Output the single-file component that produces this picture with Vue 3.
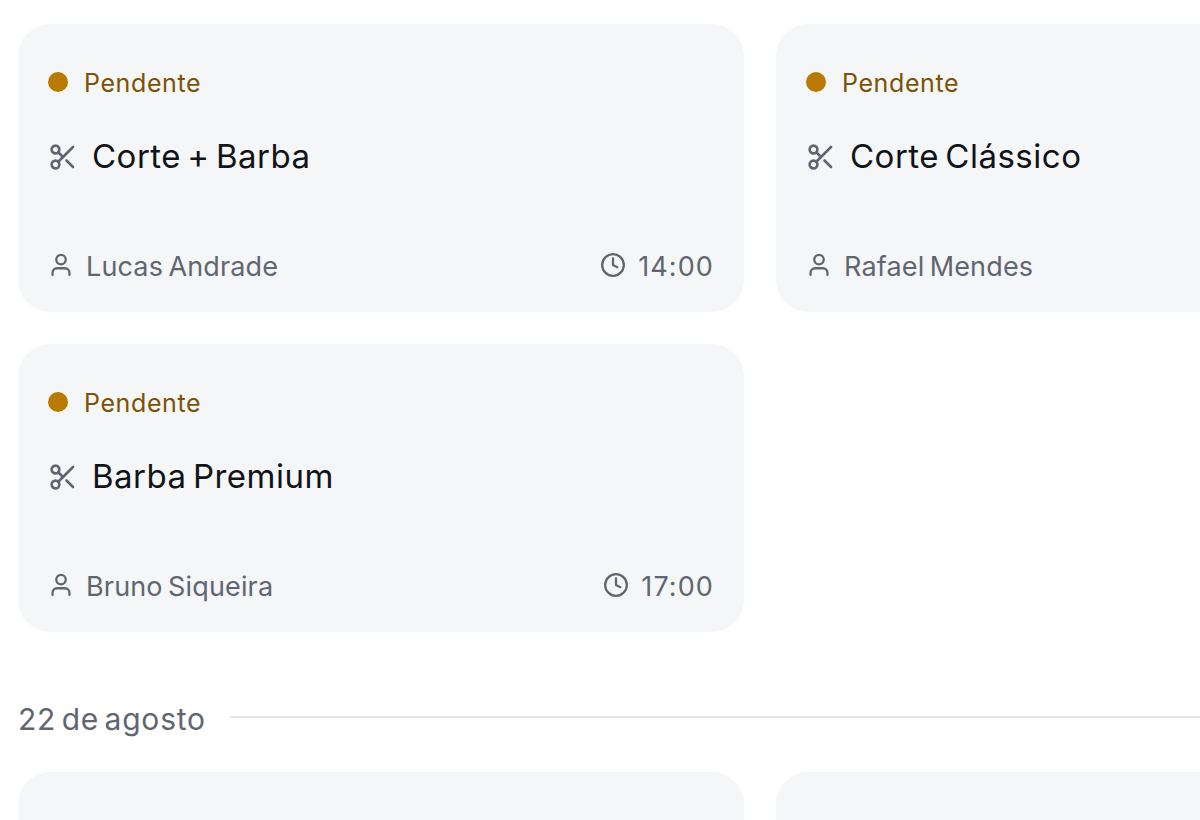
<script setup>
const groups = [
  {
    date: '',
    items: [
      { id: 1, service: 'Corte + Barba', client: 'Lucas Andrade', time: '14:00' },
      { id: 2, service: 'Corte Clássico', client: 'Rafael Mendes', time: '' },
      { id: 3, service: 'Barba Premium', client: 'Bruno Siqueira', time: '17:00' },
    ],
  },
  {
    date: '22 de agosto',
    items: [
      { id: 4, service: '', client: '', time: '' },
      { id: 5, service: '', client: '', time: '' },
    ],
  },
]
</script>

<template>
  <main class="agenda">
    <section v-for="group in groups" :key="group.date" class="group">
      <header v-if="group.date" class="day">
        <h2>{{ group.date }}</h2>
        <span class="rule"></span>
      </header>
      <div class="grid">
        <article v-for="item in group.items" :key="item.id" class="card">
          <template v-if="item.service">
            <div class="status"><span class="dot"></span><span class="label">Pendente</span></div>
            <div class="service">
              <svg class="scissors" viewBox="0 0 24 24">
                <circle cx="6" cy="6" r="3.1" />
                <path d="M8.2 8.2 12 12" />
                <path d="M20 4 8.2 15.8" />
                <circle cx="6" cy="18" r="3.1" />
                <path d="M14.8 14.8 20 20" />
              </svg>
              <h3>{{ item.service }}</h3>
            </div>
            <footer>
              <div class="client">
                <svg viewBox="0 0 24 24">
                  <path d="M19.8 21.3v-2.1a4.2 4.2 0 0 0-4.2-4.2H8.4a4.2 4.2 0 0 0-4.2 4.2v2.1" />
                  <circle cx="12" cy="7" r="4.4" />
                </svg>
                <span>{{ item.client }}</span>
              </div>
              <div v-if="item.time" class="time">
                <svg viewBox="0 0 24 24">
                  <circle cx="12" cy="12" r="10" />
                  <path d="M12 6v6l4 2" />
                </svg>
                <span>{{ item.time }}</span>
              </div>
            </footer>
          </template>
        </article>
      </div>
    </section>
  </main>
</template>

<style>
html,
body {
  overflow: hidden;
  background: #fff;
}
</style>

<style scoped>
.agenda {
  box-sizing: border-box;
  width: 1200px;
  height: 820px;
  overflow: hidden;
  padding: 24px 0 0 18px;
  font-family: Inter, "Noto Sans", sans-serif;
  color: #5f6670;
}
.grid {
  display: grid;
  grid-template-columns: 726px 726px;
  grid-auto-rows: 288px;
  gap: 32px;
}
.card {
  box-sizing: border-box;
  display: flex;
  flex-direction: column;
  padding: 40px 30px 27px 30px;
  border-radius: 32px;
  background: #f5f6f8;
}
.status {
  display: flex;
  align-items: center;
  height: 36px;
  gap: 16px;
  color: #7a5304;
  font-size: 25px;
  letter-spacing: 0.6px;
}
.label {
  padding-top: 2px;
}
.dot {
  width: 20px;
  height: 20px;
  border-radius: 50%;
  background: #b97a00;
}
.service {
  display: flex;
  align-items: center;
  height: 44px;
  margin-top: 35px;
  gap: 14px;
}
h2,
h3 {
  margin: 0;
  font-weight: 400;
  white-space: nowrap;
}
h3 {
  padding-bottom: 2px;
  color: #111317;
  font-size: 33px;
  line-height: 44px;
  letter-spacing: 0.5px;
  word-spacing: -3.5px;
}
svg {
  flex: none;
  width: 26px;
  height: 26px;
  fill: none;
  stroke: currentColor;
  stroke-width: 2.1;
  stroke-linecap: round;
  stroke-linejoin: round;
}
.scissors {
  width: 30px;
  height: 30px;
}
footer {
  display: flex;
  align-items: center;
  justify-content: space-between;
  height: 36px;
  margin-top: auto;
  font-size: 27px;
  line-height: 36px;
}
.client,
.time {
  display: flex;
  align-items: center;
  gap: 12px;
}
.client svg,
.time svg {
  margin-bottom: 4px;
}
.client {
  letter-spacing: 0.15px;
  word-spacing: -2.4px;
}
.time {
  letter-spacing: 1.1px;
}
.day {
  display: flex;
  align-items: center;
  height: 44px;
  margin: 63px 0 33px;
  gap: 24px;
}
h2 {
  padding-top: 4px;
  font-size: 30px;
  line-height: 44px;
  letter-spacing: 0.8px;
  word-spacing: -3.8px;
}
.rule {
  flex: 1;
  height: 2px;
  background: #e4e6e9;
}
</style>
